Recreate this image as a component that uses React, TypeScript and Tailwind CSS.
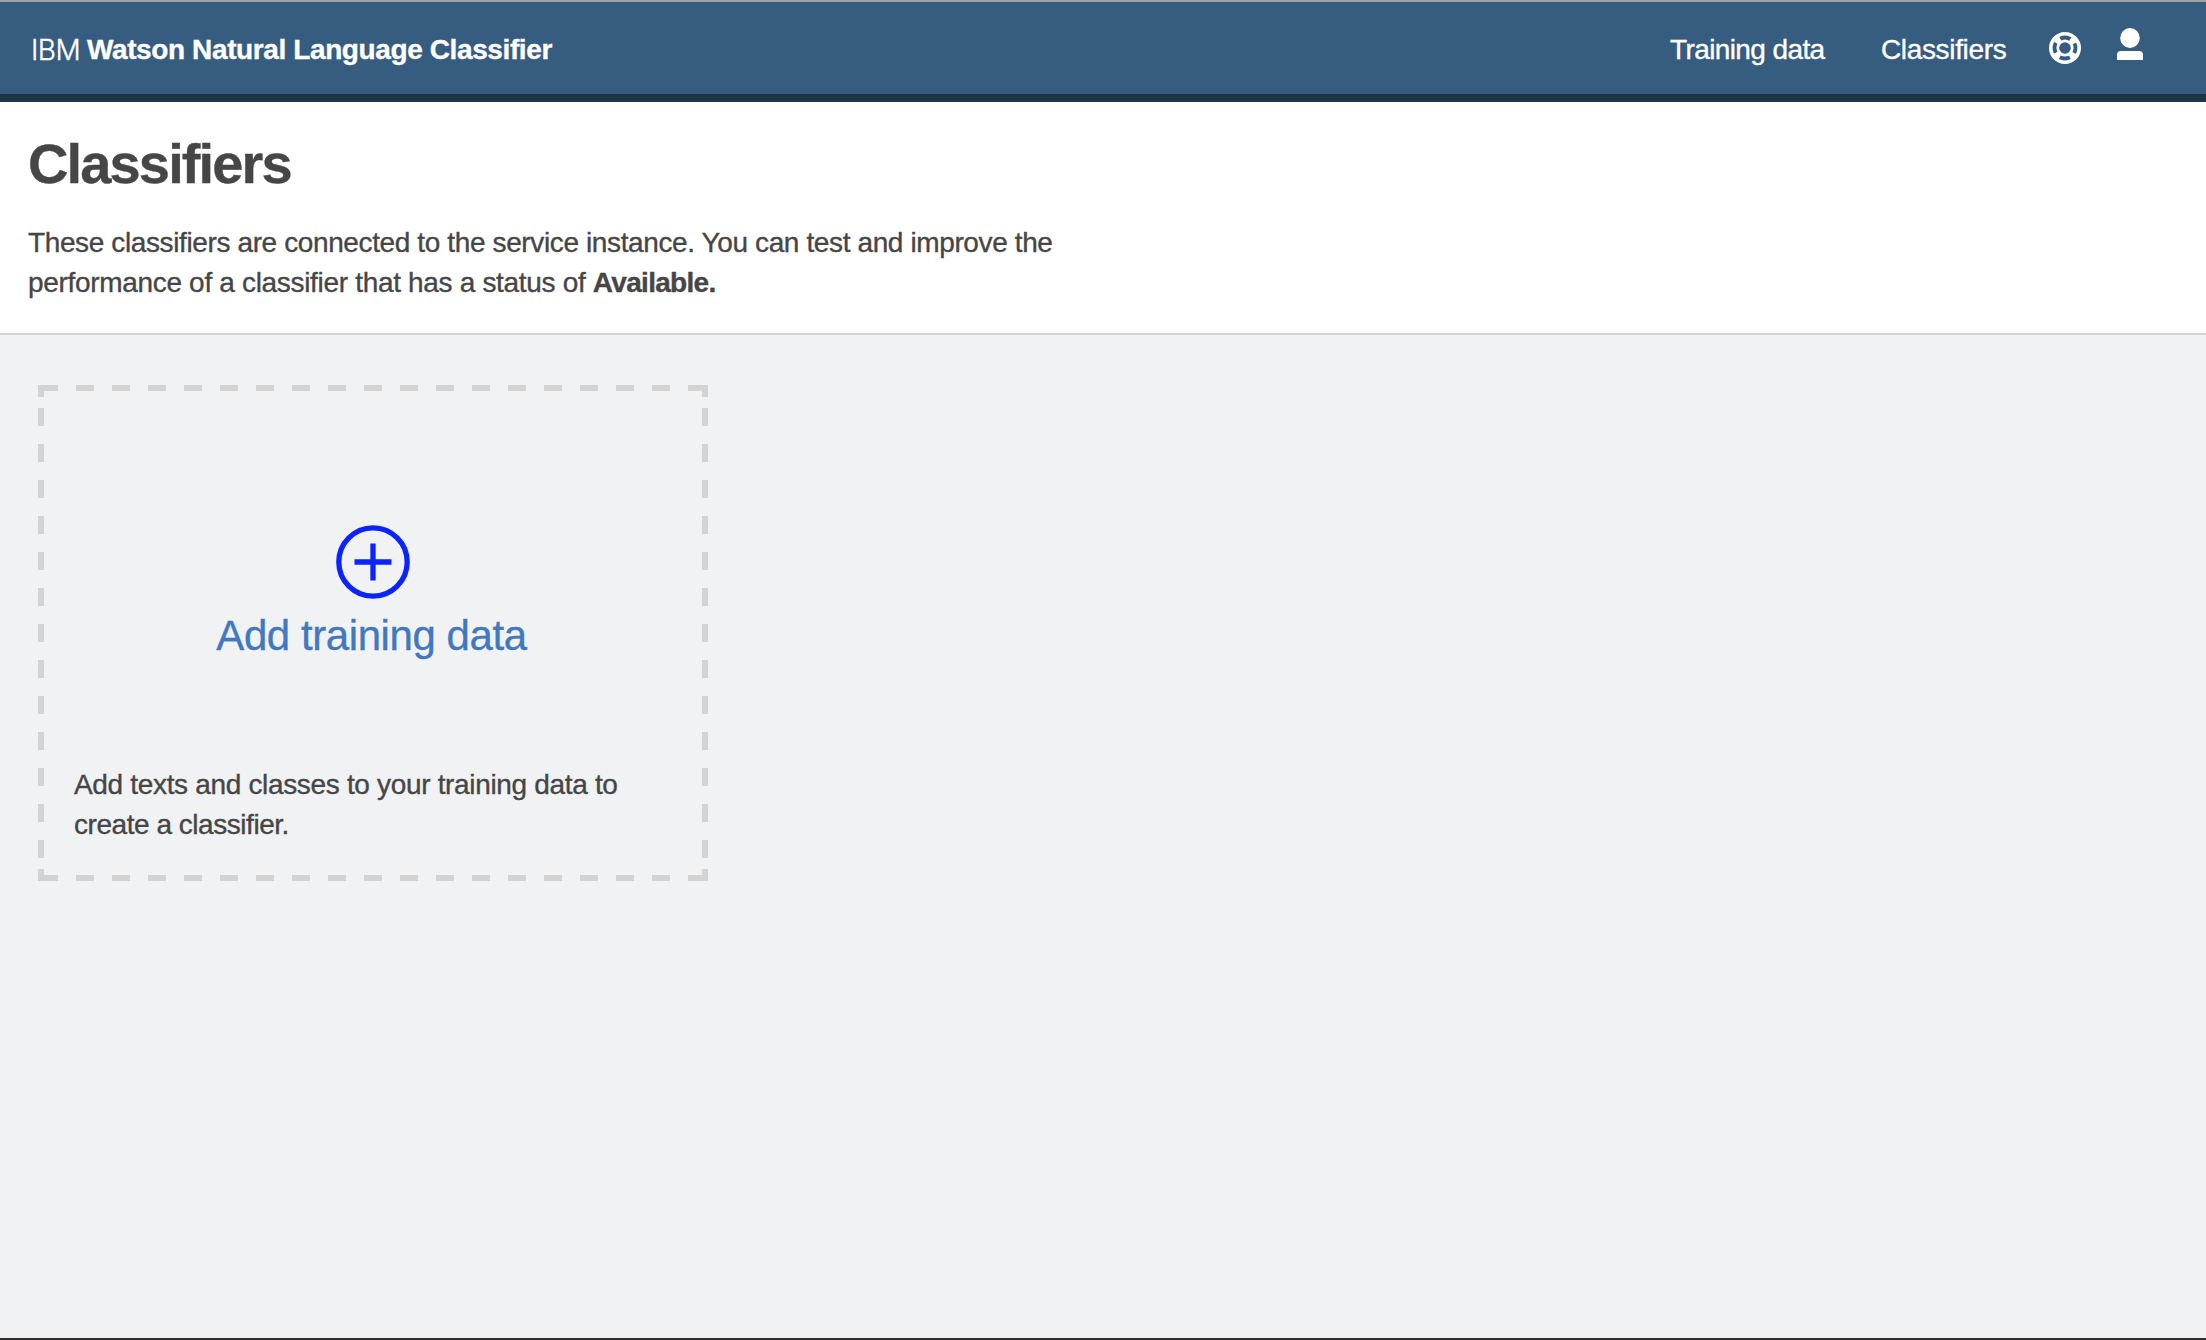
import React from "react";

function LifebuoyIcon() {
  return (
    <svg width="32" height="32" viewBox="0 0 32 32" fill="none" stroke="#fff">
      <circle cx="16" cy="16" r="14.2" strokeWidth="3.6" />
      <circle cx="16" cy="16" r="7.2" strokeWidth="2.8" />
      <circle cx="16" cy="16" r="10.5" strokeWidth="6.5" strokeDasharray="6 10.493" strokeDashoffset="-5.25" />
    </svg>
  );
}

function UserIcon() {
  return (
    <svg width="26" height="33" viewBox="0 0 26 33" fill="#fff">
      <ellipse cx="13" cy="10" rx="9.8" ry="10" />
      <path d="M0 32V27Q0 23 4 23H22Q26 23 26 27V32Z" />
    </svg>
  );
}

function PlusCircleIcon() {
  return (
    <svg width="74" height="74" viewBox="0 0 74 74" fill="none" stroke="#0a23ff" strokeWidth="5.3">
      <circle cx="37" cy="37" r="34.2" />
      <path d="M18.5 37H55.5M37 18.5V55.5" />
    </svg>
  );
}

function DashedOutline() {
  return (
    <svg className="pointer-events-none absolute inset-0" width="670" height="496" fill="none" stroke="#d3d3d3" strokeWidth="6" shapeRendering="crispEdges">
      <path d="M2 3H668M2 493H668" strokeDasharray="18 18" />
      <path d="M3 23V474M667 23V474" strokeDasharray="18 18" />
      <path d="M3 12V0M0 3H20M650 3H670M667 0V12M3 484V496M0 493H20M650 493H670M667 484V496" />
    </svg>
  );
}

export default function App() {
  return (
    <div className="flex h-[1340px] w-[2206px] flex-col overflow-hidden border-t-2 border-b-2 border-t-[#a1a1a1] border-b-[#322f31] bg-[#f0f2f4] font-['Liberation_Sans',Arial,sans-serif] text-[28px] leading-10 text-[#464646] [-webkit-text-stroke-width:0.35px]">
      <header className="flex h-[100px] shrink-0 items-start border-b-8 border-[#1f3449] bg-[#365d80] pt-7 pr-[63px] pl-[31px] text-white">
        <div className="flex whitespace-nowrap">
          <span className="w-[56px] font-['Inter',sans-serif] font-light tracking-[-0.5px]">IBM</span>
          <span className="font-bold tracking-[-0.39px]">Watson Natural Language Classifier</span>
        </div>
        <nav className="ml-auto flex items-start whitespace-nowrap">
          <a className="w-[211px] tracking-[-0.6px]">Training data</a>
          <a className="w-[168px] tracking-[-0.35px]">Classifiers</a>
          <span className="mt-0.5 w-[68px]"><LifebuoyIcon /></span>
          <span className="-mt-0.5"><UserIcon /></span>
        </nav>
      </header>
      <section className="h-[233px] shrink-0 border-b-2 border-[#d3d3d3] bg-white pt-[30px] pl-7">
        <h1 className="text-[56px] leading-[64px] font-bold tracking-[-1.86px]">Classifiers</h1>
        <p className="mt-[27px] whitespace-nowrap tracking-[-0.38px]">
          <span className="block">These classifiers are connected to the service instance. You can test and improve the</span>
          <span className="block tracking-[-0.32px]">performance of a classifier that has a status of <b className="tracking-[-0.7px]">Available.</b></span>
        </p>
      </section>
      <main className="px-[38px] pt-[50px]">
        <article className="relative flex h-[496px] w-[670px] flex-col items-center pt-[140px]">
          <DashedOutline />
          <PlusCircleIcon />
          <a className="mt-[7px] pr-[3px] text-[42px] leading-[60px] whitespace-nowrap text-[#4178be] tracking-[-0.43px]">Add training data</a>
          <p className="mt-[99px] w-full pl-9 whitespace-nowrap tracking-[-0.33px]">
            <span className="block">Add texts and classes to your training data to</span>
            <span className="block tracking-[-0.46px]">create a classifier.</span>
          </p>
        </article>
      </main>
    </div>
  );
}
